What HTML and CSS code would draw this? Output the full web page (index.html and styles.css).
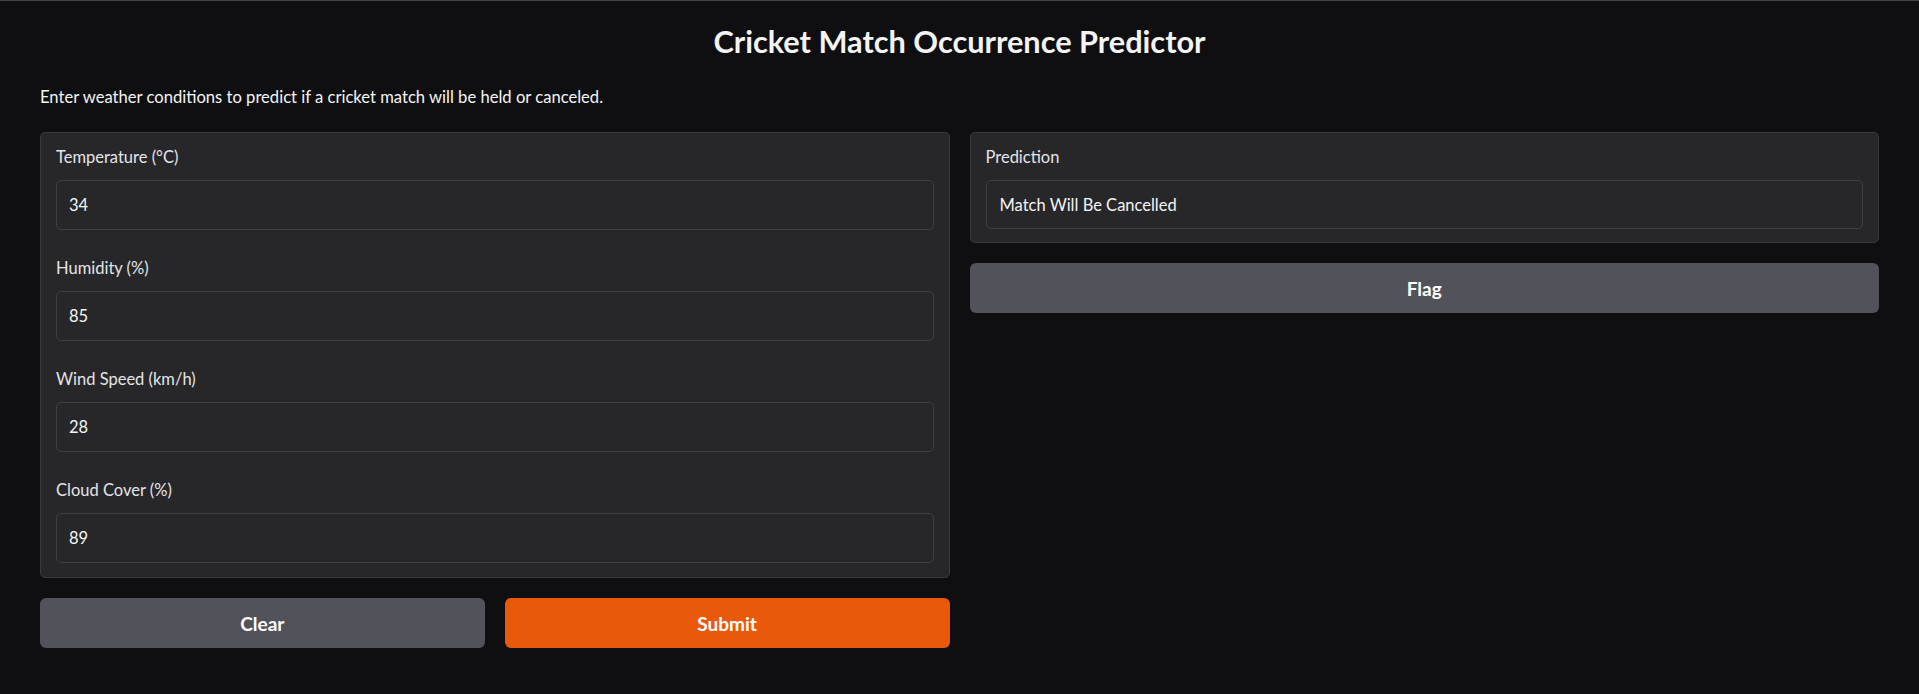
FILE: index.html
```html
<!DOCTYPE html>
<html lang="en">
<head>
<meta charset="utf-8">
<title>Cricket Match Occurrence Predictor</title>
<link rel="stylesheet" href="styles.css">
</head>
<body>
<div class="app">
  <h1 class="title">Cricket Match Occurrence Predictor</h1>
  <p class="desc">Enter weather conditions to predict if a cricket match will be held or canceled.</p>
  <div class="columns">
    <div class="col">
      <div class="panel">
        <label class="field">
          <span class="label">Temperature (°C)</span>
          <input class="box" type="text" value="34">
        </label>
        <label class="field">
          <span class="label">Humidity (%)</span>
          <input class="box" type="text" value="85">
        </label>
        <label class="field">
          <span class="label">Wind Speed (km/h)</span>
          <input class="box" type="text" value="28">
        </label>
        <label class="field">
          <span class="label">Cloud Cover (%)</span>
          <input class="box" type="text" value="89">
        </label>
      </div>
      <div class="btn-row">
        <button class="btn btn-secondary">Clear</button>
        <button class="btn btn-primary">Submit</button>
      </div>
    </div>
    <div class="col">
      <div class="panel panel-output">
        <div class="field">
          <span class="label">Prediction</span>
          <div class="box box-output">Match Will Be Cancelled</div>
        </div>
      </div>
      <button class="btn btn-secondary">Flag</button>
    </div>
  </div>
</div>
</body>
</html>
```

FILE: styles.css
```css
* { box-sizing: border-box; }
html, body {
  margin: 0;
  padding: 0;
  background: #0f0f11;
}
body {
  border-top: 1px solid #3f4440;
  font-family: "Lato", "Roboto", "Liberation Sans", sans-serif;
  color: #f4f4f5;
  min-height: 694px;
}
.app {
  padding: 0 40px;
}
.title {
  margin: 0;
  padding-top: 23px;
  font-size: 30.7px;
  line-height: 36px;
  font-weight: 700;
  text-align: center;
  color: #f4f4f5;
}
.desc {
  margin: 25px 0 0;
  font-size: 16.6px;
  line-height: 24px;
  color: #f4f4f5;
}
.columns {
  display: grid;
  grid-template-columns: 1fr 1fr;
  gap: 20px;
  margin-top: 23px;
  align-items: start;
}
.col {
  display: flex;
  flex-direction: column;
  gap: 20px;
}
.panel {
  background: #27272a;
  border: 1px solid #3a3a3e;
  border-radius: 5px;
  padding: 13px 15px 14px;
  display: flex;
  flex-direction: column;
  gap: 27px;
}
.panel-output {
  padding-bottom: 13px;
}
.field {
  display: flex;
  flex-direction: column;
  gap: 12px;
}
.label {
  font-size: 16.5px;
  line-height: 22px;
  color: #e4e4e7;
}
.box {
  display: flex;
  align-items: center;
  height: 50px;
  width: 100%;
  background: #27272a;
  border: 1px solid #3f3f46;
  border-radius: 5px;
  padding: 0 12px;
  font-family: inherit;
  font-size: 16.5px;
  color: #f4f4f5;
  outline: none;
}
.box-output {
  height: 49px;
  padding: 0 13px;
}
.btn-row {
  display: grid;
  grid-template-columns: 1fr 1fr;
  gap: 20px;
}
.btn {
  height: 50px;
  border: none;
  border-radius: 6px;
  font-family: inherit;
  font-size: 19px;
  font-weight: 700;
  color: #ffffff;
  cursor: pointer;
}
.btn-secondary {
  background: #52525b;
}
.btn-primary {
  background: #ea580c;
}
```
